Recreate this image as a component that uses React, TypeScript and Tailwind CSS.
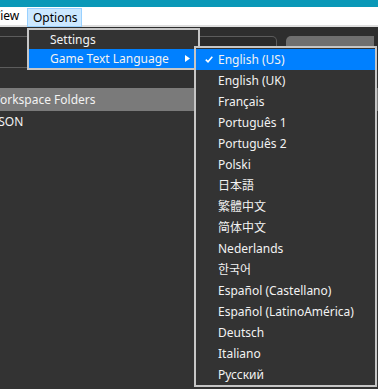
import React from "react";

const langs = [
  "English (US)",
  "English (UK)",
  "Français",
  "Português 1",
  "Português 2",
  "Polski",
  "日本語",
  "繁體中文",
  "简体中文",
  "Nederlands",
  "한국어",
  "Español (Castellano)",
  "Español (LatinoAmérica)",
  "Deutsch",
  "Italiano",
  "Русский",
];

export default function App() {
  return (
    <div className="relative w-[378px] h-[389px] overflow-hidden bg-[#333333] text-[12px] text-[#f2f2f2] font-['Noto_Sans','Noto_Sans_CJK_JP',sans-serif]">
      {/* title strip */}
      <div className="h-[7px] bg-[#0a98b7]" />
      {/* menubar */}
      <div className="h-[20px] bg-white border-b-2 border-[#dedede] flex items-start text-black">
        <div className="ml-[-7px] w-[34px] h-[18px] flex items-center">View</div>
        <div className="mt-[1px] w-[55px] h-[19px] bg-[#cce8ff] border border-[#99d1ff] flex items-center pl-[5px]">
          Options
        </div>
      </div>

      {/* body */}
      <div className="h-[9px] bg-[#2e2e2e]" />
      <div className="h-[32px] flex bg-[#2e2e2e]">
        <div className="w-[277px] h-full border-y border-r border-[#5c5c5c] rounded-tr-[5px] bg-[#2b2b2b]" />
        <div className="ml-[9px] w-[88px] h-full bg-[#6f6f6f] rounded-tl-[5px]" />
      </div>
      <div className="h-[20px] bg-[#303030]" />
      <div className="h-[23px] bg-[#7a7a7a] flex items-center overflow-hidden">
        <span className="ml-[-11px] whitespace-nowrap">Workspace Folders</span>
      </div>
      <div className="h-[22px] flex items-center overflow-hidden">
        <span className="ml-[-5px]">JSON</span>
      </div>

      {/* Options dropdown */}
      <div className="absolute left-[27px] top-[28px] w-[173px] border-2 border-[#c6c6c6] bg-[#333333]">
        <div className="h-[19px] flex items-center pl-[21px]">Settings</div>
        <div className="h-[19px] flex items-center pl-[21px] bg-[#0080ff] relative">
          Game Text Language
          <svg className="absolute left-[156px] top-[6px]" width="5" height="7" viewBox="0 0 5 7">
            <path d="M0 0 L5 3.5 L0 7 Z" fill="#ffffff" />
          </svg>
        </div>
      </div>

      {/* Language submenu */}
      <div className="absolute left-[194px] top-[46px] w-[183px] border-2 border-[#c6c6c6] bg-[#333333] pt-[1px]">
        {langs.map((l, i) => (
          <div
            key={l}
            className={
              "h-[21px] flex items-center pl-[22px] relative whitespace-nowrap " +
              (i === 0 ? "bg-[#0080ff]" : "")
            }
          >
            {i === 0 && (
              <svg className="absolute left-[9px] top-[7px]" width="8" height="7" viewBox="0 0 8 7">
                <path d="M0.8 3.6 L3 5.8 L7.3 0.8" fill="none" stroke="#ffffff" strokeWidth="1.6" />
              </svg>
            )}
            {l}
          </div>
        ))}
      </div>
    </div>
  );
}
